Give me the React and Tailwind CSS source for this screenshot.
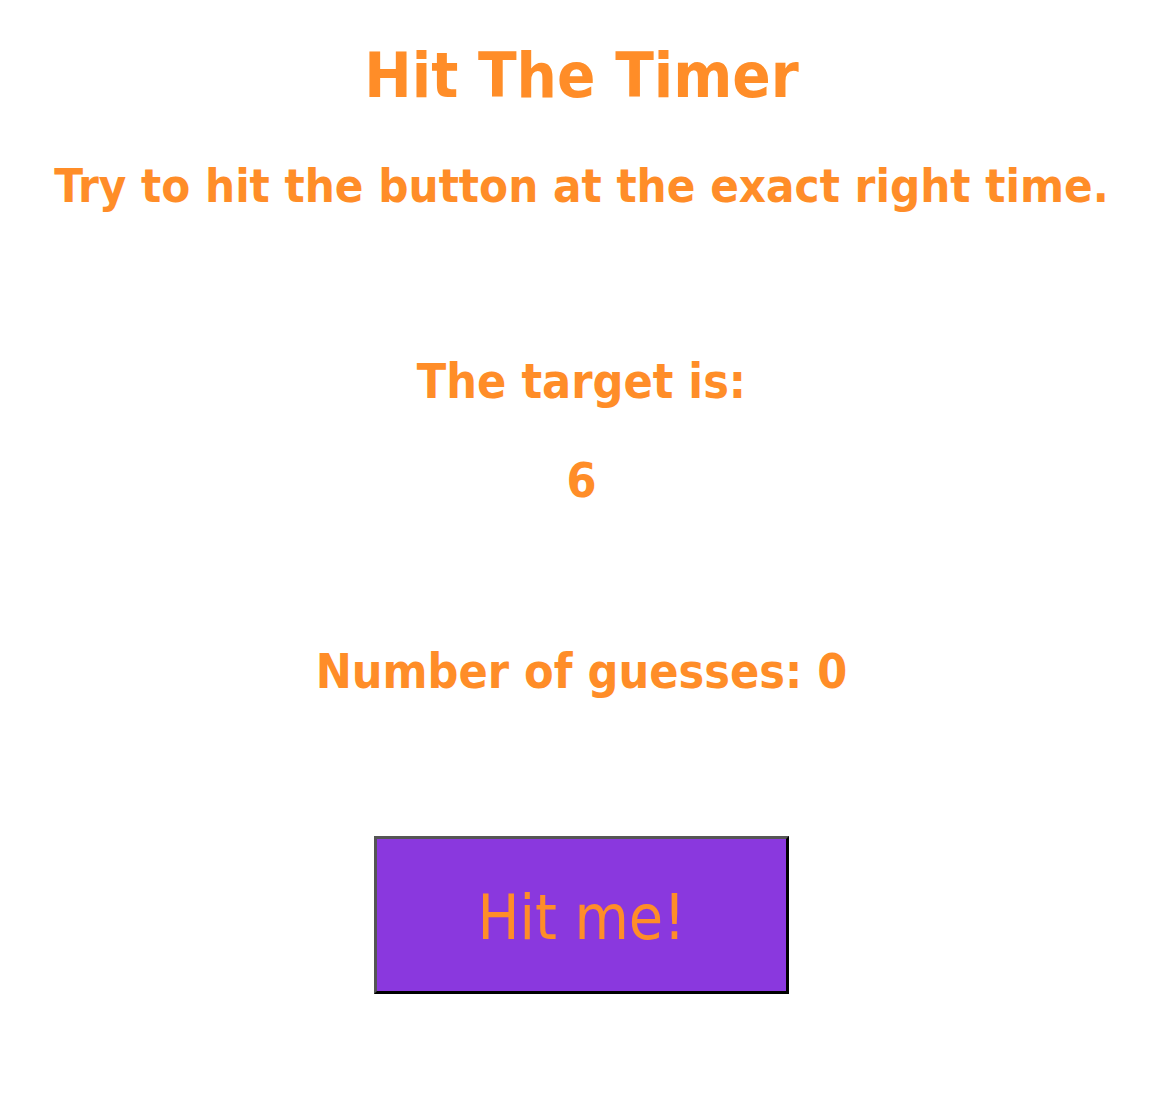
import React, { useState } from 'react';

const App = () => {
  const [guesses, setGuesses] = useState(0);
  const target = 6;

  return (
    <div
      className="flex min-h-screen flex-col items-center bg-white pr-[5px] text-center text-[#ff8d28]"
      style={{ fontFamily: '"DejaVu Sans Condensed", "DejaVu Sans", Tahoma, sans-serif' }}
    >
      <h1 className="mt-[36px] text-[63px] font-bold leading-[80px]">Hit The Timer</h1>
      <h2 className="mt-[40px] text-[47px] font-bold leading-[60px]">
        Try to hit the button at the exact right time.
      </h2>

      <p className="mt-[135px] text-[48px] font-bold leading-[60px]">The target is:</p>
      <p className="mt-[39px] text-[48px] font-bold leading-[60px]">{target}</p>

      <p className="mt-[131px] text-[48px] font-bold leading-[60px]">
        Number of guesses: {guesses}
      </p>

      <button
        onClick={() => setGuesses(guesses + 1)}
        className="mt-[135px] h-[158px] w-[415px] border-[3px] border-t-[#555555] border-l-[#555555] border-b-black border-r-black bg-[#8a38de] pt-[6px] text-[62px] leading-none text-[#ff8d28]"
      >
        Hit me!
      </button>
    </div>
  );
};

export default App;
